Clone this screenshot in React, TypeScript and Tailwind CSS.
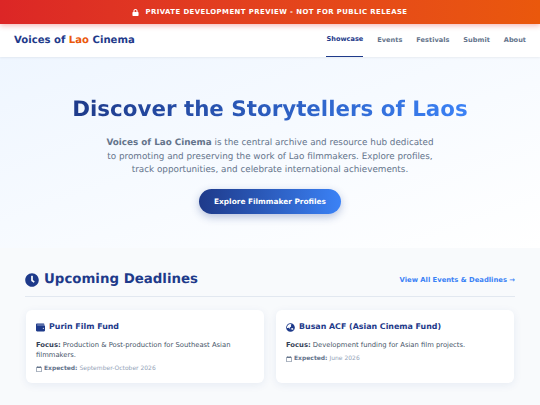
import { FaLock, FaClock, FaWallet, FaGlobeAsia, FaRegCalendar } from "react-icons/fa";

function Card({ icon, title, focus, expected }: { icon: React.ReactNode; title: string; focus: string; expected: string }) {
  return (
    <div className="bg-white rounded-[6px] shadow-[0_2px_8px_rgba(30,58,138,0.08)] px-[10px] pt-[10px] pb-[8px] h-[73px]">
      <div className="flex items-center gap-[4px] text-[#1e3a8a] font-bold text-[7.9px] leading-[14px]">
        {icon}
        <span>{title}</span>
      </div>
      <p className="mt-[6px] text-[6.8px] leading-[10px] text-[#475569]">
        <span className="font-bold text-[#334155]">Focus:</span> {focus}
      </p>
      <p className="mt-[4px] flex items-center gap-[2px] text-[6px] leading-[9px] text-[#94a3b8]">
        <FaRegCalendar className="text-[6px] text-[#64748b]" />
        <span><span className="font-bold text-[#64748b]">Expected:</span> {expected}</span>
      </p>
    </div>
  );
}

export default function App() {
  return (
    <div className="w-[540px] h-[405px] overflow-hidden bg-[#f8fafc] font-['DejaVu_Sans',sans-serif] [text-rendering:geometricPrecision]">
      <div className="relative z-10 h-[24px] flex items-center justify-center gap-[6px] bg-gradient-to-r from-[#dc2626] to-[#ea580c] text-white text-[6.9px] font-bold tracking-[0.45px] shadow-[0_2px_5px_rgba(220,38,38,0.3)]">
        <FaLock className="text-[7px]" />
        <span>PRIVATE DEVELOPMENT PREVIEW - NOT FOR PUBLIC RELEASE</span>
      </div>
      <nav className="h-[33px] bg-white flex items-center justify-between px-[14px] shadow-[0_1px_2px_rgba(0,0,0,0.06)] relative">
        <div className="text-[10.1px] font-bold text-[#1e3a8a]">Voices of <span className="text-[#ea580c]">Lao</span> Cinema</div>
        <div className="flex h-full gap-[14px] text-[6.6px] font-bold text-[#64748b]">
          <span className="flex items-center text-[#1e3a8a] border-b-[1px] border-[#1e3a8a]">Showcase</span>
          <span className="flex items-center">Events</span>
          <span className="flex items-center">Festivals</span>
          <span className="flex items-center">Submit</span>
          <span className="flex items-center">About</span>
        </div>
      </nav>
      <section className="h-[191px] bg-gradient-to-br from-[#eff6ff] to-[#ffffff] flex flex-col items-center pt-[37px]">
        <h1 className="text-[21.4px] leading-[32px] font-bold bg-gradient-to-r from-[#1e3a8a] to-[#3b82f6] bg-clip-text text-transparent">Discover the Storytellers of Laos</h1>
        <p className="mt-[11px] w-[338px] text-center text-[8.8px] leading-[13.6px] text-[#64748b]">
          <span className="font-bold">Voices of Lao Cinema</span> is the central archive and resource hub dedicated to promoting and preserving the work of Lao filmmakers. Explore profiles, track opportunities, and celebrate international achievements.
        </p>
        <div className="mt-[11px] h-[25px] w-[142px] rounded-full bg-gradient-to-r from-[#1e3a8a] to-[#3b82f6] text-white text-[7.4px] font-bold flex items-center justify-center shadow-[0_3px_8px_rgba(30,58,138,0.3)]">Explore Filmmaker Profiles</div>
      </section>
      <section className="px-[25px] pt-[22px]">
        <div className="flex items-center justify-between pb-[6px] border-b border-[#e2e8f0]">
          <div className="flex items-center gap-[5px] text-[#1e3a8a] font-bold text-[13.35px] leading-[20px]">
            <FaClock className="text-[14px]" />
            <span>Upcoming Deadlines</span>
          </div>
          <span className="text-[6.8px] font-bold text-[#3b82f6]">View All Events &amp; Deadlines →</span>
        </div>
        <div className="grid grid-cols-2 gap-[12px] mt-[13px] px-[1px]">
          <Card icon={<FaWallet className="text-[9px]" />} title="Purin Film Fund" focus="Production & Post-production for Southeast Asian filmmakers." expected="September-October 2026" />
          <Card icon={<FaGlobeAsia className="text-[9px]" />} title="Busan ACF (Asian Cinema Fund)" focus="Development funding for Asian film projects." expected="June 2026" />
        </div>
      </section>
    </div>
  );
}
